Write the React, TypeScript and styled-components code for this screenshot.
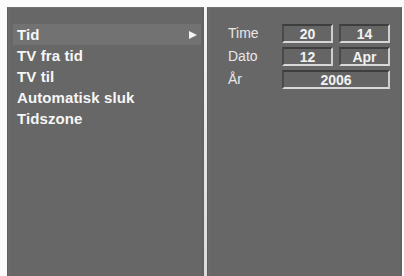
import React from "react";
import styled, { createGlobalStyle } from "styled-components";

const Global = createGlobalStyle`
  html, body { margin: 0; padding: 0; background: #ffffff; }
  body { font-family: "Liberation Sans", Arial, sans-serif; }
`;

const Screen = styled.div`
  width: 404px;
  height: 276px;
  box-sizing: border-box;
  padding: 7px 2px 0 7px;
  display: flex;
  background: #fbfbfb;
  overflow: hidden;
`;

const Panel = styled.div<{ $w: number }>`
  width: ${(p) => p.$w}px;
  height: 100%;
  box-sizing: border-box;
  background: #676767;
  border-left: 1px solid #5f5f5f;
  border-top: 1px solid #707070;
  box-shadow: inset 2px 0 0 #6b6b6b, inset -2px 0 0 #626262;
`;

const Divider = styled.div`
  width: 3px;
  height: 100%;
  background: linear-gradient(#f4f4f4, #dcdcdc);
`;

const Menu = styled.ul`
  list-style: none;
  margin: 0;
  padding: 16px 3px 0 5px;
  display: flex;
  flex-direction: column;
`;

const MenuItem = styled.li<{ $active?: boolean }>`
  height: 21px;
  display: flex;
  align-items: center;
  justify-content: space-between;
  padding: 0 4px 0 4px;
  font-size: 15px;
  font-weight: bold;
  color: #f6f6f6;
  letter-spacing: 0.1px;
  background: ${(p) => (p.$active ? "#727272" : "transparent")};
`;

const Arrow = styled.span`
  width: 0;
  height: 0;
  border-top: 4px solid transparent;
  border-bottom: 4px solid transparent;
  border-left: 8px solid #f4f4f4;
`;

const Form = styled.div`
  padding: 16px 0 0 20px;
  display: grid;
  grid-template-columns: 48px 51px 51px;
  column-gap: 6px;
  row-gap: 4px;
  align-items: center;
`;

const Label = styled.div`
  font-size: 14px;
  color: #e8e8e8;
  height: 19px;
  line-height: 19px;
`;

const Field = styled.div<{ $span?: number }>`
  grid-column: span ${(p) => p.$span ?? 1};
  height: 19px;
  box-sizing: border-box;
  border-top: 2px solid #3e3e3e;
  border-left: 2px solid #4a4a4a;
  border-bottom: 2px solid #d8d8d8;
  border-right: 2px solid #cfcfcf;
  background: #656565;
  color: #f2f2f2;
  font-size: 14px;
  font-weight: bold;
  display: flex;
  align-items: center;
  justify-content: center;
`;

const items = ["Tid", "TV fra tid", "TV til", "Automatisk sluk", "Tidszone"];

export default function App() {
  return (
    <>
      <Global />
      <Screen>
        <Panel $w={197}>
          <Menu>
            {items.map((t, i) => (
              <MenuItem key={t} $active={i === 0}>
                {t}
                {i === 0 && <Arrow />}
              </MenuItem>
            ))}
          </Menu>
        </Panel>
        <Divider />
        <Panel $w={195}>
          <Form>
            <Label>Time</Label>
            <Field>20</Field>
            <Field>14</Field>
            <Label>Dato</Label>
            <Field>12</Field>
            <Field>Apr</Field>
            <Label>År</Label>
            <Field $span={2}>2006</Field>
          </Form>
        </Panel>
      </Screen>
    </>
  );
}
